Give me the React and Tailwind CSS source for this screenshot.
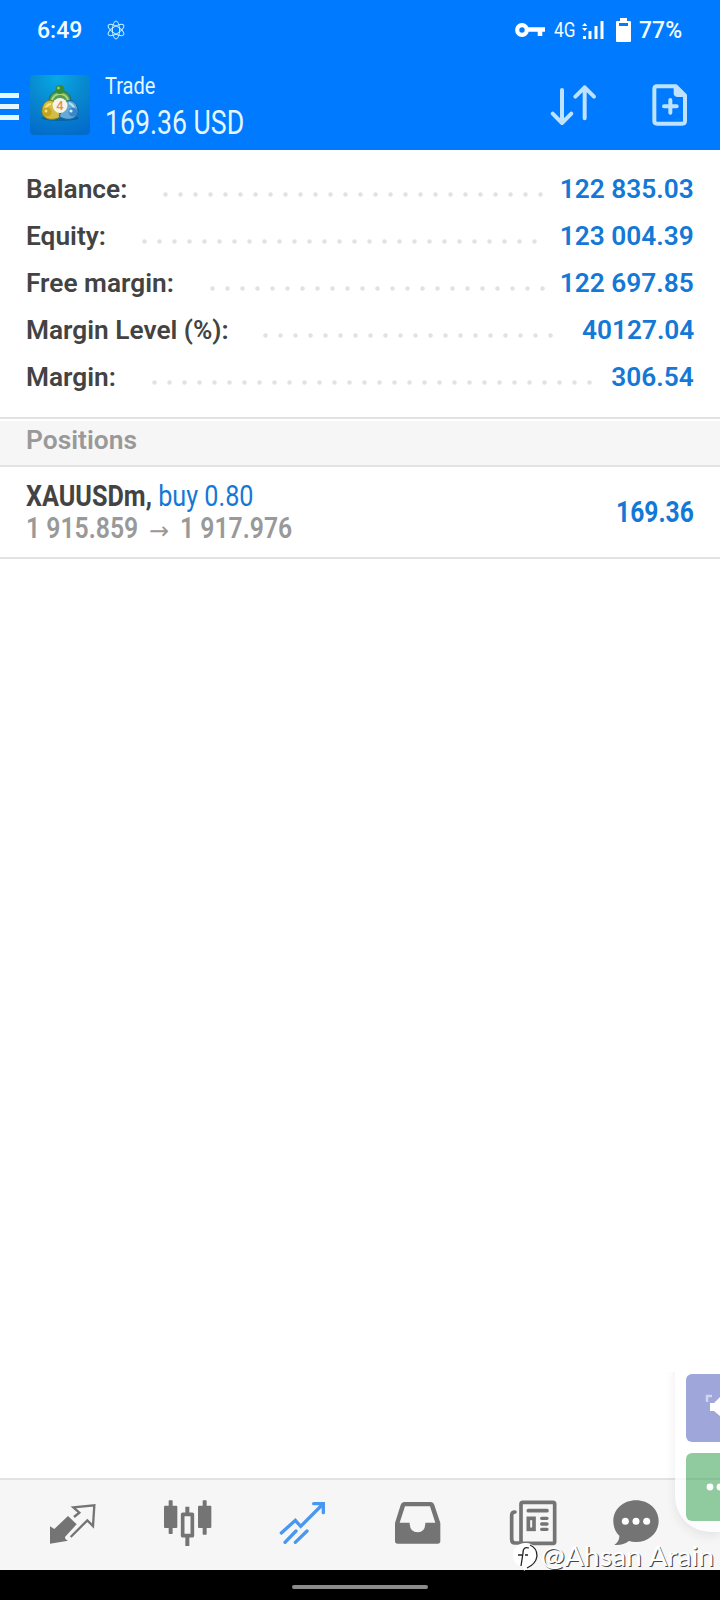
import React from 'react';

const account = [
  { label: 'Balance:', value: '122 835.03', dots: 'left-[158px] w-[390px]' },
  { label: 'Equity:', value: '123 004.39', dots: 'left-[137px] w-[405px]' },
  { label: 'Free margin:', value: '122 697.85', dots: 'left-[205px] w-[345px]' },
  { label: 'Margin Level (%):', value: '40127.04', dots: 'left-[258px] w-[300px]' },
  { label: 'Margin:', value: '306.54', dots: 'left-[147px] w-[450px]' },
];

const StatusBar = () => (
  <div className="flex h-[60px] items-center text-[#f4fcff]">
    <span className="ml-[37px] w-[70px] pt-[3px] text-[23px] font-medium">6:49</span>
    <svg className="h-[20px] w-[18px]" viewBox="0 0 18 20" fill="none" stroke="#c8f0ff" strokeWidth="1">
      <ellipse cx="9" cy="10" rx="3.6" ry="9" />
      <ellipse cx="9" cy="10" rx="3.6" ry="9" transform="rotate(58 9 10)" />
      <ellipse cx="9" cy="10" rx="3.6" ry="9" transform="rotate(-58 9 10)" />
    </svg>
    <svg className="ml-[390px] h-[16px] w-[31px]" viewBox="0 0 31 16" fill="none" stroke="#fff">
      <circle cx="7" cy="8" r="4.8" strokeWidth="4.2" />
      <path d="M12 7.5H30M25 7V14" strokeWidth="4.6" />
    </svg>
    <span className="ml-[8px] w-[28px] text-[20px]">
      <span className="inline-block origin-left scale-x-[0.86]">4G</span>
    </span>
    <svg className="h-[20px] w-[22px]" viewBox="0 0 22 20" fill="#fff">
      <path d="M0 6L2.7 3L5.4 6ZM0 8L2.7 11L5.4 8ZM1 16h3v3H1zM6.500 11h3v8h-3zM12.500 6h3v13h-3zM18.500 1h3v18h-3z" />
    </svg>
    <svg className="ml-[12px] h-[24px] w-[15px]" viewBox="0 0 15 24" fill="#fff">
      <path fillRule="evenodd" d="M4 0h7v3h3q1 0 1 1v19q0 1-1 1H1q-1 0-1-1V4q0-1 1-1h3ZM3 5v3h9V5Z" />
    </svg>
    <span className="ml-[8px] pt-[3px] text-[23px] font-medium">77%</span>
  </div>
);

const AppLogo = () => (
  <svg className="ml-[11px] h-[60px] w-[60px]" viewBox="0 0 60 60">
    <defs>
      <radialGradient id="logoBg" cx="0.45" cy="0.05" r="1">
        <stop offset="0" stopColor="#08a9e4" />
        <stop offset="0.5" stopColor="#0887ce" />
        <stop offset="1" stopColor="#036bcb" />
      </radialGradient>
    </defs>
    <rect width="60" height="60" rx="4" fill="url(#logoBg)" />
    <ellipse cx="30" cy="43" rx="19" ry="3" fill="#064f86" opacity="0.5" />
    <path d="M19 30C18 20 23 16 30 16C37 16 42 20 41 30L30 35Z" fill="#559d55" stroke="#256b48" />
    <path d="M12 37C12 28 17 24 23 26L31 41C26 46 13 46 12 37Z" fill="#d4bd46" stroke="#86821f" />
    <path d="M48 37C48 29 43 24 37 26L29 41C34 46 47 46 48 37Z" fill="#65a9d7" stroke="#1a5f9c" />
    <path d="M22 25Q24 19 30 19Q36 19 38 25" fill="none" stroke="#a8d77c" strokeWidth="2" />
    <path d="M15 36Q16 29 21 29" fill="none" stroke="#f5e67e" strokeWidth="2" />
    <path d="M39 28Q44 30 45 36" fill="none" stroke="#b3e4fa" strokeWidth="2" />
    <circle cx="30" cy="14.500" r="4.500" fill="#368c3b" />
    <circle cx="28.500" cy="13" r="1.500" fill="#95cb67" />
    <circle cx="17" cy="37" r="4.500" fill="#c5a31f" />
    <circle cx="16" cy="36" r="1.500" fill="#f8e872" />
    <circle cx="43" cy="37" r="4.500" fill="#3987c9" />
    <circle cx="41" cy="36" r="1.600" fill="#c8f2ff" />
    <circle cx="30" cy="30.500" r="7.500" fill="#f4f5e9" />
    <text x="30" y="35" textAnchor="middle" fontSize="13" fontWeight="500" fill="#ef8d4b">4</text>
  </svg>
);

const Header = () => (
  <div className="flex h-[90px] text-[#e4f7ff]">
    <div className="mt-[33px] flex h-[27px] w-[19px] flex-col justify-between">
      <div className="h-[5px] bg-[#e4f7ff]" />
      <div className="h-[5px] bg-[#e4f7ff]" />
      <div className="h-[5px] bg-[#e4f7ff]" />
    </div>
    <div className="mt-[15px]">
      <AppLogo />
    </div>
    <div className="ml-[15px] w-[444px] pt-[11px]">
      <div className="text-[24px] leading-[30px]">
        <span className="inline-block origin-left scale-x-[0.835]">Trade</span>
      </div>
      <div className="mt-[3px] text-[33px] leading-[38px]">
        <span className="inline-block origin-left scale-x-[0.808]">169.36 USD</span>
      </div>
    </div>
    <svg className="mt-[24px] h-[42px] w-[48px]" viewBox="0 0 144 126" fill="none" stroke="#bfe2ff" strokeWidth="12" strokeLinecap="round" strokeLinejoin="round">
      <path d="M39 18V117M11 89L39 117L67 89M107 103V10M79 38L107 10L135 38" />
    </svg>
    <svg className="ml-[55px] mt-[23px] h-[44px] w-[36px]" viewBox="0 0 108 132" fill="none" stroke="#bfe2ff" strokeLinejoin="round">
      <path d="M15 10H72L99 37V114Q99 122 91 122H15Q7 122 7 114V18Q7 10 15 10Z" strokeWidth="12" />
      <path d="M67 8V30Q67 40 78 40H102Z" fill="#bfe2ff" strokeWidth="4" />
      <path d="M36 70H74M55 51V89" strokeWidth="12" strokeLinecap="round" />
    </svg>
  </div>
);

const AccountRow = ({ row }) => (
  <div className="relative flex h-[47px] items-center justify-between px-[26px] pt-[2px] text-[26px] font-semibold">
    <span className="inline-block origin-left scale-x-[1.01] text-[#434343]">{row.label}</span>
    <div
      className={`absolute top-[22px] h-[15px] bg-[radial-gradient(circle,#e2e2e2_1.8px,transparent_2.6px)] bg-[length:15px_15px] ${row.dots}`}
    />
    <span className="inline-block origin-right scale-x-[1.01] text-[#1478d6]">{row.value}</span>
  </div>
);

const Positions = () => (
  <React.Fragment>
    <div className="mt-[17px] h-[50px] border-y-2 border-[#e2e2e2] pt-[2px]">
      <div className="h-[44px] bg-[#f6f6f6] pl-[26px] text-[26px] leading-[38px] font-semibold text-[#999]">
        <span className="inline-block origin-left scale-x-[1.015]">Positions</span>
      </div>
    </div>
    <div className="flex h-[92px] items-center justify-between border-b-2 border-[#e2e2e2] px-[26px]">
      <div className="pb-[1px] text-[30px] leading-[32px]">
        <div className="origin-left scale-x-[0.84] whitespace-nowrap">
          <span className="font-bold text-[#434343]">XAUUSDm,</span>{' '}
          <span className="text-[#1478d6]">buy 0.80</span>
        </div>
        <div className="flex font-semibold whitespace-nowrap text-[#999]">
          <span className="w-[123px]">
            <span className="inline-block origin-left scale-x-[0.825]">1 915.859</span>
          </span>
          <span className="relative top-[3px] w-[31px] font-['DejaVu_Sans'] text-[24px] font-normal">→</span>
          <span className="inline-block origin-left scale-x-[0.825]">1 917.976</span>
        </div>
      </div>
      <span className="inline-block origin-right scale-x-[0.82] pb-[1px] text-[30px] font-bold text-[#1478d6]">169.36</span>
    </div>
  </React.Fragment>
);

const NavBar = () => (
  <div className="flex h-[92px] border-t-2 border-[#e2e2e2] bg-[#f6f6f6] pt-[19px] pl-[48px] text-[#747474]">
    <svg className="h-[48px] w-[48px]" viewBox="0 0 144 144">
      <path d="M6 82L19 90L60 51L86 76L51 114Q51 122 60 125L6 134Z" fill="currentColor" />
      <path d="M78 54L94 41L76 25L139 19L135 81L118 64L68 114" fill="none" stroke="currentColor" strokeWidth="7" />
    </svg>
    <svg className="ml-[68px] h-[48px] w-[48px]" viewBox="0 0 144 144" fill="currentColor">
      <rect x="0" y="20" width="40" height="67" rx="3" />
      <rect x="14" y="4" width="12" height="101" rx="2" />
      <rect x="56" y="46" width="29" height="64" fill="none" stroke="currentColor" strokeWidth="11" strokeLinejoin="round" />
      <path d="M64 23h12v22H64zM64 112h12v29H64z" />
      <rect x="102" y="20" width="40" height="67" rx="3" />
      <rect x="116" y="4" width="12" height="103" rx="2" />
    </svg>
    <svg className="ml-[66px] h-[48px] w-[48px]" viewBox="0 0 144 144" fill="none" stroke="#4997ee" strokeWidth="10" strokeLinecap="round">
      <path d="M10 102L52 64L68 82L135 15M107 14H136V41M21 130L54 96M52 130L87 96" />
    </svg>
    <svg className="ml-[67px] h-[48px] w-[48px]" viewBox="0 0 144 144" fill="currentColor">
      <path
        fillRule="evenodd"
        d="M6 72L23 18Q26 9 35 9H112Q121 9 124 18L142 72V126Q142 134 134 134H14Q6 134 6 126ZM20 71H50Q50 100 74 100Q97 100 97 71H127L111 22H36Z"
      />
    </svg>
    <svg className="ml-[68px] h-[48px] w-[48px]" viewBox="0 0 144 144" fill="none" stroke="currentColor" strokeWidth="11" strokeLinecap="round">
      <rect x="36" y="10" width="101" height="123" rx="5" />
      <path d="M18 39Q8 39 8 49V121Q8 132 18 132H36M58 35H114" />
      <rect x="58" y="58" width="17" height="33" />
      <path d="M98 58H114M98 75H114M98 91H114" strokeWidth="10" />
    </svg>
    <svg className="ml-[55px] h-[48px] w-[48px]" viewBox="0 0 144 144">
      <path d="M72 4C111 4 140 31 140 66S111 129 72 129Q60 129 51 126Q33 140 7 138Q23 127 22 110C10 99 4 84 4 66C4 31 33 4 72 4Z" fill="currentColor" />
      <circle cx="40" cy="67" r="10.500" fill="#fff" />
      <circle cx="72" cy="67" r="10.500" fill="#fff" />
      <circle cx="104" cy="67" r="10.500" fill="#fff" />
    </svg>
  </div>
);

const FloatingPanel = () => (
  <div className="absolute top-[1338px] right-0 h-[194px] w-[45px] rounded-l-[36px] bg-white/75 pt-[36px] pl-[11px] shadow-[0_4px_12px_rgba(0,0,0,0.08)] [clip-path:inset(34px_0_-20px_-20px)]">
    <div className="h-[68px] rounded-l-[6px] bg-[#9fa6da]">
      <svg className="h-[68px] w-[34px]" viewBox="0 0 34 68">
        <path d="M21 28V22H26" fill="none" stroke="#d0d4f0" strokeWidth="2.500" />
        <path d="M24 29H28L34 23V42L28 37H24Z" fill="#fff" />
      </svg>
    </div>
    <div className="mt-[11px] h-[68px] rounded-l-[6px] bg-[#90cb9f]">
      <svg className="h-[68px] w-[34px]" viewBox="0 0 34 68">
        <path d="M0 26H34" stroke="#85bd94" strokeWidth="1.500" />
        <circle cx="24" cy="34" r="3.400" fill="#fff" />
        <circle cx="34" cy="34" r="3.400" fill="#fff" />
      </svg>
    </div>
  </div>
);

const Watermark = () => (
  <div className="absolute top-[1542px] left-[513px] flex h-[30px] items-center text-white">
    <svg className="h-[30px] w-[28px]" viewBox="0 0 28 30" fill="none">
      <path d="M12 1C19 0 24 6 24 13C24 20 19 25 14 26L11 29L10 24C4 24 0 20 0 14C0 6 5 1 12 1Z" fill="#fff" />
      <path d="M17 3Q24 6 24 14Q23 22 14 26M16 6Q10 4 10 11L8 24M5 13H9M12 13H15" stroke="#222" strokeWidth="1.300" />
    </svg>
    <span className="inline-block origin-left scale-x-[1.05] pb-[2px] font-['Lato'] text-[27px] leading-[30px] whitespace-nowrap [text-shadow:1px_1px_0px_#444]">
      @Ahsan Arain
    </span>
  </div>
);

const App = () => {
  return (
    <div className="relative flex h-[1600px] w-[720px] flex-col overflow-hidden bg-white font-['Roboto',sans-serif]">
      <div className="bg-[#007aff]">
        <StatusBar />
        <Header />
      </div>
      <div className="pt-[15px]">
        {account.map(row => (
          <AccountRow key={row.label} row={row} />
        ))}
      </div>
      <div className="grow">
        <Positions />
      </div>
      <NavBar />
      <div className="flex h-[30px] justify-center bg-black pt-[15px]">
        <div className="h-[4px] w-[136px] rounded-full bg-[#8c8c8c]" />
      </div>
      <FloatingPanel />
      <Watermark />
    </div>
  );
};

export default App;
